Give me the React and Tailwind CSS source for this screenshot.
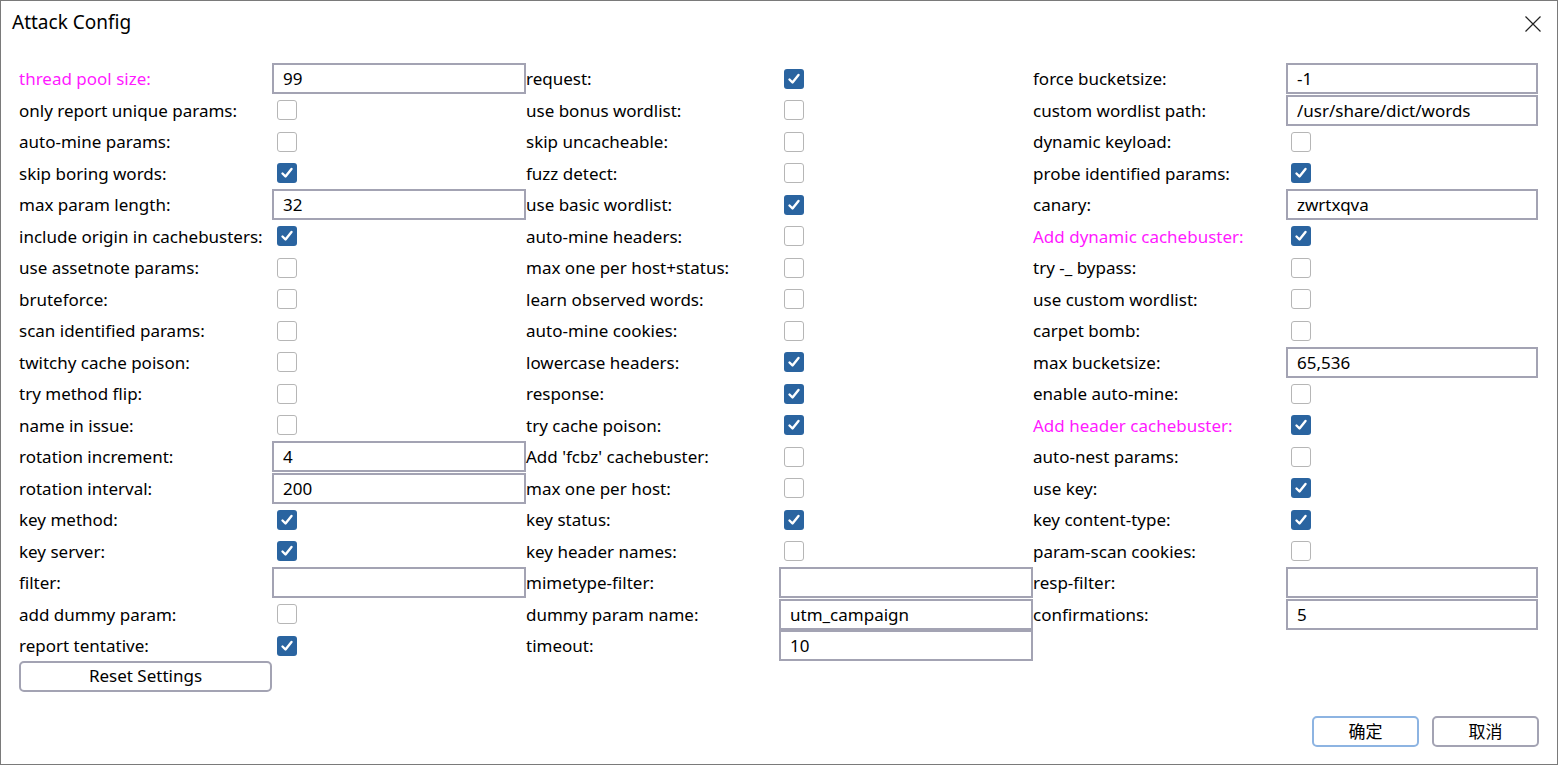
import React from 'react';

const rows = [
  [['thread pool size:', 'input', '99', true], ['request:', 'check', true], ['force bucketsize:', 'input', '-1']],
  [['only report unique params:', 'check', false], ['use bonus wordlist:', 'check', false], ['custom wordlist path:', 'input', '/usr/share/dict/words']],
  [['auto-mine params:', 'check', false], ['skip uncacheable:', 'check', false], ['dynamic keyload:', 'check', false]],
  [['skip boring words:', 'check', true], ['fuzz detect:', 'check', false], ['probe identified params:', 'check', true]],
  [['max param length:', 'input', '32'], ['use basic wordlist:', 'check', true], ['canary:', 'input', 'zwrtxqva']],
  [['include origin in cachebusters:', 'check', true], ['auto-mine headers:', 'check', false], ['Add dynamic cachebuster:', 'check', true, true]],
  [['use assetnote params:', 'check', false], ['max one per host+status:', 'check', false], ['try -_ bypass:', 'check', false]],
  [['bruteforce:', 'check', false], ['learn observed words:', 'check', false], ['use custom wordlist:', 'check', false]],
  [['scan identified params:', 'check', false], ['auto-mine cookies:', 'check', false], ['carpet bomb:', 'check', false]],
  [['twitchy cache poison:', 'check', false], ['lowercase headers:', 'check', true], ['max bucketsize:', 'input', '65,536']],
  [['try method flip:', 'check', false], ['response:', 'check', true], ['enable auto-mine:', 'check', false]],
  [['name in issue:', 'check', false], ['try cache poison:', 'check', true], ['Add header cachebuster:', 'check', true, true]],
  [['rotation increment:', 'input', '4'], ["Add 'fcbz' cachebuster:", 'check', false], ['auto-nest params:', 'check', false]],
  [['rotation interval:', 'input', '200'], ['max one per host:', 'check', false], ['use key:', 'check', true]],
  [['key method:', 'check', true], ['key status:', 'check', true], ['key content-type:', 'check', true]],
  [['key server:', 'check', true], ['key header names:', 'check', false], ['param-scan cookies:', 'check', false]],
  [['filter:', 'input', ''], ['mimetype-filter:', 'input', ''], ['resp-filter:', 'input', '']],
  [['add dummy param:', 'check', false], ['dummy param name:', 'input', 'utm_campaign'], ['confirmations:', 'input', '5']],
  [['report tentative:', 'check', true], ['timeout:', 'input', '10'], null],
];

const CheckBox = ({ checked }) =>
  checked ? (
    <div className="w-5 h-5 rounded-[3px] bg-[#2a64a0] flex items-center justify-center">
      <svg width="14" height="14" viewBox="0 0 14 14">
        <path d="M2.5 7.5 L5.5 10.5 L11.5 3" fill="none" stroke="white" strokeWidth="2.4" strokeLinecap="round" strokeLinejoin="round" />
      </svg>
    </div>
  ) : (
    <div className="w-5 h-5 rounded-[3px] border-[1.5px] border-[#b6b6b6] bg-white" />
  );

const Field = ({ item }) => {
  if (!item) return <><div /><div /></>;
  const [label, kind, value, magenta] = item;
  return (
    <>
      <div className={`h-[31.5px] flex items-center whitespace-nowrap ${magenta ? 'text-[#ff1aff]' : 'text-black'}`}>
        {label}
      </div>
      {kind === 'input' ? (
        <div className="h-[31.5px] flex items-center">
          <div className="h-[31px] w-full border-2 border-[#a3a3b3] bg-white flex items-center pl-[9px]">{value}</div>
        </div>
      ) : (
        <div className="h-[31.5px] flex items-center pl-[5px]">
          <CheckBox checked={value} />
        </div>
      )}
    </>
  );
};

export default function App() {
  return (
    <div
      className="w-[1558px] h-[765px] bg-white border border-[#7a7a7a] flex flex-col text-[17px] text-black overflow-hidden"
      style={{ fontFamily: '"Noto Sans", "Noto Sans CJK SC", sans-serif' }}
    >
      <div className="h-[45px] flex items-center justify-between pl-[11px] pr-[15px]">
        <span className="text-[19px] pb-[2px]">Attack Config</span>
        <svg width="18" height="18" viewBox="0 0 18 18">
          <path d="M1.5 1.5 L16.5 16.5 M16.5 1.5 L1.5 16.5" stroke="#222" strokeWidth="1.2" />
        </svg>
      </div>
      <div className="pt-[17px] pl-[18px]">
        <div className="grid grid-cols-[253px_254px_253px_254px_253px_252px]">
          {rows.map((r, i) => (
            <React.Fragment key={i}>
              <Field item={r[0]} />
              <Field item={r[1]} />
              <Field item={r[2]} />
            </React.Fragment>
          ))}
        </div>
        <button className="mt-[-1px] w-[253px] h-[31px] border-2 border-[#a3a3b3] rounded-[5px] bg-white flex items-center justify-center">
          Reset Settings
        </button>
      </div>
      <div className="flex-1" />
      <div className="flex justify-end gap-[13px] pr-[18px] pb-[17px]">
        <button className="w-[107px] h-[31px] border-2 border-[#8db4e2] rounded-[5px] bg-white">确定</button>
        <button className="w-[107px] h-[31px] border-2 border-[#a3a3b3] rounded-[5px] bg-white">取消</button>
      </div>
    </div>
  );
}
